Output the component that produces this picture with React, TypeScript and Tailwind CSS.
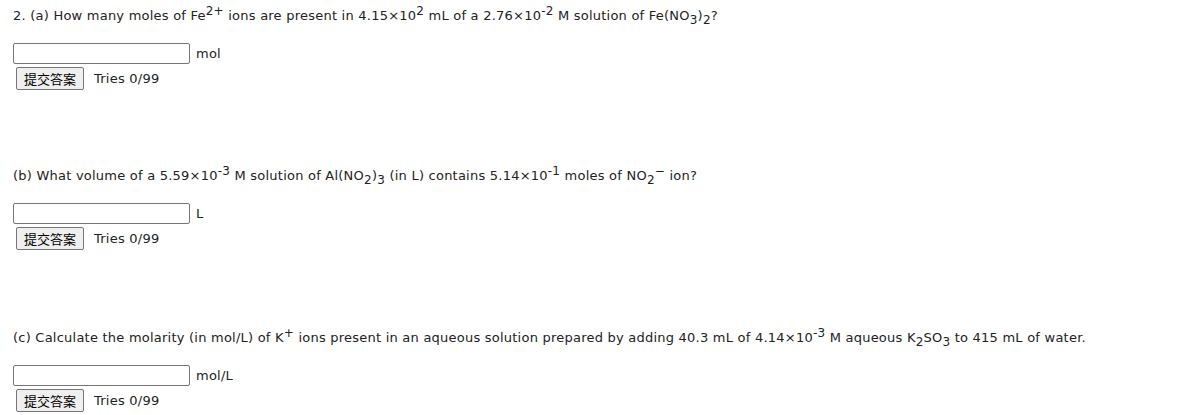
import React from 'react'

const Sup = ({ children }: { children: React.ReactNode }) => (
  <span className="relative -top-[5px] text-[12px] leading-none">{children}</span>
)

const Sub = ({ children }: { children: React.ReactNode }) => (
  <span className="relative top-[4px] text-[12px] leading-none">{children}</span>
)

const AnswerBlock = ({ unit }: { unit: string }) => (
  <div>
    <div className="mt-[19px] flex items-center gap-[6px]">
      <input
        type="text"
        className="w-[177px] h-[21px] border border-[#767676] rounded-[2px] bg-white px-1 outline-none"
      />
      <span>{unit}</span>
    </div>
    <div className="mt-[3px] ml-[3px] flex items-center gap-[10px]">
      <button
        className="h-[23px] px-[7px] border border-[#767676] rounded-[2px] bg-[#efefef] text-[13px] tracking-normal text-black"
        style={{ fontFamily: '"Noto Sans CJK SC", sans-serif' }}
      >
        提交答案
      </button>
      <span>Tries 0/99</span>
    </div>
  </div>
)

export default function App() {
  return (
    <div
      className="min-h-screen bg-white text-[#222] text-[13px] leading-[16px] tracking-[0.23px] px-[13px] pt-[8px]"
      style={{ fontFamily: '"DejaVu Sans", Verdana, sans-serif' }}
    >
      {/* part a */}
      <section>
        <p>
          2. (a) How many moles of Fe<Sup>2+</Sup> ions are present in 4.15×10<Sup>2</Sup> mL of a
          2.76×10<Sup>-2</Sup> M solution of Fe(NO<Sub>3</Sub>)<Sub>2</Sub>?
        </p>
        <AnswerBlock unit="mol" />
      </section>

      {/* part b */}
      <section className="mt-[78px]">
        <p>
          (b) What volume of a 5.59×10<Sup>-3</Sup> M solution of Al(NO<Sub>2</Sub>)<Sub>3</Sub> (in L)
          contains 5.14×10<Sup>-1</Sup> moles of NO<Sub>2</Sub>
          <Sup>−</Sup> ion?
        </p>
        <AnswerBlock unit="L" />
      </section>

      {/* part c */}
      <section className="mt-[80px]">
        <p>
          (c) Calculate the molarity (in mol/L) of K<Sup>+</Sup> ions present in an aqueous solution
          prepared by adding 40.3 mL of 4.14×10<Sup>-3</Sup> M aqueous K<Sub>2</Sub>SO<Sub>3</Sub> to
          415 mL of water.
        </p>
        <AnswerBlock unit="mol/L" />
      </section>
    </div>
  )
}
